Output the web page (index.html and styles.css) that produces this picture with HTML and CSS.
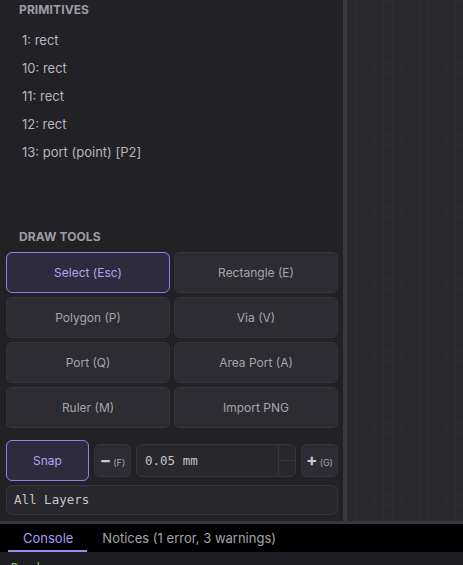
FILE: index.html
```html
<!DOCTYPE html>
<html>
<head>
<meta charset="utf-8">
<link rel="stylesheet" href="styles.css">
</head>
<body>
<div class="app">
  <div class="main">
    <aside class="sidebar">
      <div class="section-title">PRIMITIVES</div>
      <ul class="prim-list">
        <li>1: rect</li>
        <li>10: rect</li>
        <li>11: rect</li>
        <li>12: rect</li>
        <li>13: port (point) [P2]</li>
      </ul>
      <div class="spacer"></div>
      <div class="section-title">DRAW TOOLS</div>
      <div class="tools">
        <button class="tool active">Select (Esc)</button>
        <button class="tool">Rectangle (E)</button>
        <button class="tool">Polygon (P)</button>
        <button class="tool">Via (V)</button>
        <button class="tool">Port (Q)</button>
        <button class="tool">Area Port (A)</button>
        <button class="tool">Ruler (M)</button>
        <button class="tool">Import PNG</button>
      </div>
      <div class="snap-row">
        <button class="snap">Snap</button>
        <button class="step"><span class="sym">&minus;</span><span class="key">(F)</span></button>
        <div class="num">
          <span class="num-val">0.05 mm</span>
          <div class="spin"><div></div><div></div></div>
        </div>
        <button class="step"><span class="sym">+</span><span class="key">(G)</span></button>
      </div>
      <div class="layers">All Layers</div>
    </aside>
    <div class="divider"></div>
    <div class="canvas"></div>
  </div>
  <div class="hsep"></div>
  <div class="tabs">
    <div class="tab on">Console</div>
    <div class="tab">Notices (1 error, 3 warnings)</div>
  </div>
  <div class="console"><span class="log">Ready</span></div>
</div>
</body>
</html>
```
FILE: styles.css
```css
* { box-sizing: border-box; }
html, body { margin: 0; padding: 0; }
body {
  width: 463px;
  height: 565px;
  overflow: hidden;
  background: #1e1e22;
  font-family: Inter, "Noto Sans", sans-serif;
  font-size: 13px;
  color: #b4b4bc;
}
.app { display: flex; flex-direction: column; height: 565px; overflow: hidden; }
.main { display: flex; height: 521px; flex-shrink: 0; }
.sidebar {
  width: 343px;
  background: #212126;
  padding: 0 5px 0 6px;
  display: flex;
  flex-direction: column;
}
.section-title {
  font-size: 12px;
  font-weight: 700;
  color: #9c9ca4;
  line-height: 20px;
  padding-left: 13px;
  letter-spacing: 0.1px;
}
.prim-list {
  list-style: none;
  margin: 6px 0 0;
  padding: 0 0 0 16px;
}
.prim-list li {
  height: 28px;
  line-height: 28px;
  color: #b6b6be;
}
.spacer { height: 61px; }
.tools {
  margin-top: 5px;
  display: grid;
  grid-template-columns: 1fr 1fr;
  grid-auto-rows: 41px;
  gap: 4px;
}
button {
  font-family: Inter, "Noto Sans", sans-serif;
  font-size: 12px;
  cursor: pointer;
}
.tool {
  background: #2c2c32;
  border: 1px solid #36363c;
  border-radius: 6px;
  color: #a4a4ac;
  padding: 0;
}
.tool.active, .snap {
  background: #2f2b3f;
  border: 1px solid #9182e6;
  color: #b0a6f2;
}
.snap-row {
  margin-top: 12px;
  display: flex;
  align-items: center;
  gap: 5px;
  height: 41px;
  flex-shrink: 0;
}
.snap {
  width: 83px;
  height: 41px;
  border-radius: 6px;
  padding: 0;
}
.step {
  width: 37px;
  height: 33px;
  background: #2c2c32;
  border: 1px solid #36363c;
  border-radius: 6px;
  color: #c8c8d0;
  padding: 0;
  display: flex;
  align-items: center;
  justify-content: center;
  gap: 2px;
}
.sym { font-size: 17px; font-weight: 700; line-height: 1; }
.key { font-size: 9px; color: #a8a8b0; margin-top: 3px; }
.num {
  flex: 1;
  height: 33px;
  background: #28282d;
  border: 1px solid #36363c;
  border-radius: 6px;
  display: flex;
  overflow: hidden;
}
.num-val {
  flex: 1;
  font-family: "DejaVu Sans Mono", "Liberation Mono", monospace;
  font-size: 12.5px;
  color: #c4c4cc;
  line-height: 31px;
  padding-left: 8px;
}
.spin {
  width: 17px;
  border-left: 1px solid #36363c;
  display: flex;
  flex-direction: column;
}
.spin div { flex: 1; }
.spin div:first-child { border-bottom: 1px solid #36363c; }
.layers {
  margin-top: 4px;
  height: 30px;
  flex-shrink: 0;
  background: #28282d;
  border: 1px solid #36363c;
  border-radius: 6px;
  font-family: "DejaVu Sans Mono", "Liberation Mono", monospace;
  font-size: 12.5px;
  color: #c4c4cc;
  line-height: 28px;
  padding-left: 7px;
}
.divider { width: 4px; background: #38383e; }
.canvas {
  flex: 1;
  background-color: #29292e;
  background-image:
    linear-gradient(to right, #2d2d33 1px, transparent 1px),
    linear-gradient(to bottom, #2d2d33 1px, transparent 1px);
  background-size: 9px 9px;
}
.hsep { height: 3px; background: #36363b; flex-shrink: 0; }
.tabs {
  height: 28px;
  flex-shrink: 0;
  background: #000;
  display: flex;
  padding-left: 8px;
}
.tab {
  padding: 0 14px 0 15px;
  line-height: 28px;
  color: #a4a4ac;
  font-size: 13px;
}
.tab.on {
  color: #a99cf2;
  box-shadow: inset 0 -2px 0 #9d8cf0;
}
.console {
  flex: 1;
  background: #1e1e22;
  padding: 8px 0 0 11px;
  font-family: "DejaVu Sans Mono", monospace;
  font-size: 12px;
  line-height: 16px;
}
.log { color: #8fbf7f; }
```
